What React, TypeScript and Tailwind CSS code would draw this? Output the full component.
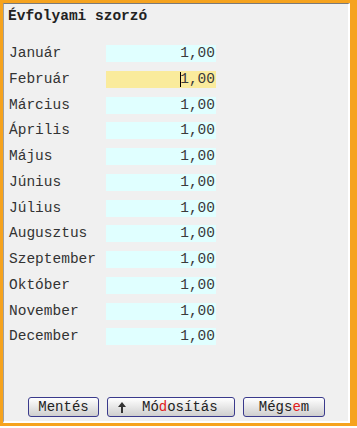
const months = [
  "Január",
  "Február",
  "Március",
  "Április",
  "Május",
  "Június",
  "Július",
  "Augusztus",
  "Szeptember",
  "Október",
  "November",
  "December",
];

export default function App() {
  return (
    <div className="w-[357px] h-[428px] bg-white" style={{ fontFamily: '"Liberation Mono", "Courier New", monospace' }}>
      <div className="h-[426px] border-t-[3px] border-l-[3px] border-b-[3px] border-r-[7px] border-[#f6a31e]">
        <div className="h-full flex flex-col bg-[#f0f0f0] border-t border-l border-t-[#7a7a7a] border-l-[#a0a0a0] border-r-2 border-b-2 border-r-white border-b-white">
          <div className="pl-[4px] pt-[2px] h-[20px] leading-[20px] text-[14.5px] font-bold text-[#222]">Évfolyami szorzó</div>

          <div className="mt-[21px] flex flex-col gap-[8.75px] pl-[5px]">
            {months.map((m, i) => (
              <div key={m} className="flex items-center h-[17px]">
                <div className="w-[97px] text-[14.5px] text-[#333] leading-[17px]">{m}</div>
                <div
                  className={`w-[110px] h-[17px] flex items-center justify-end pr-[1px] text-[14.5px] leading-[17px] text-[#3a3a3a] ${
                    i === 1 ? "bg-[#faeb9c]" : "bg-[#e0ffff]"
                  }`}
                >
                  {i === 1 && <span className="w-px h-[15px] bg-black mr-[-1px]" />}
                  <span>1,00</span>
                </div>
              </div>
            ))}
          </div>

          <div className="mt-auto mb-[4px] flex justify-center gap-[8px] pl-[1px]">
            <button className="w-[71px] h-[20px] rounded-[3px] border border-[#3a3a8c] bg-gradient-to-b from-white to-[#cfcfcf] text-[14px] leading-[18px] text-[#222]">
              Mentés
            </button>
            <button className="w-[128px] h-[20px] rounded-[3px] border border-[#3a3a8c] bg-gradient-to-b from-white to-[#cfcfcf] text-[14px] leading-[18px] text-[#222] flex items-center pl-[10px]">
              <svg width="8" height="11" viewBox="0 0 8 11" className="mr-[16px]">
                <path d="M4 0 L8 5 L5 5 L5 11 L3 11 L3 5 L0 5 Z" fill="#333" />
              </svg>
              <span>
                Mó<span className="text-[#e02020]">d</span>osítás
              </span>
            </button>
            <button className="w-[82px] h-[20px] rounded-[3px] border border-[#3a3a8c] bg-gradient-to-b from-white to-[#cfcfcf] text-[14px] leading-[18px] text-[#222]">
              Mégs<span className="text-[#e02020]">e</span>m
            </button>
          </div>
        </div>
      </div>
    </div>
  );
}
